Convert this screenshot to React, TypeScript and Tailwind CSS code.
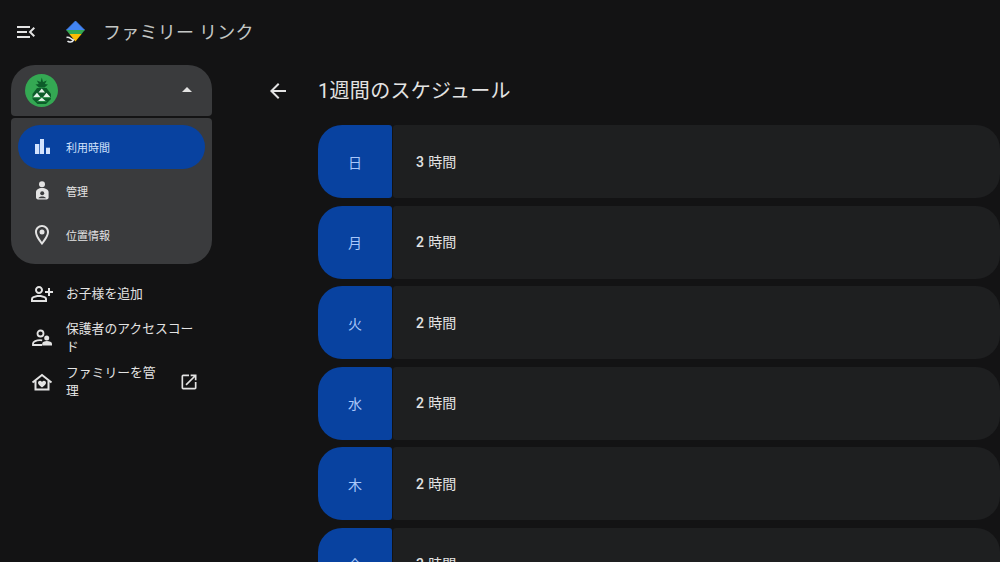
import { MdArrowBack, MdArrowDropUp, MdMenuOpen, MdOpenInNew, MdOutlineLocationOn, MdOutlinePersonAddAlt } from "react-icons/md";

const schedule = [
  { day: "日", num: "3", unit: "時間" },
  { day: "月", num: "2", unit: "時間" },
  { day: "火", num: "2", unit: "時間" },
  { day: "水", num: "2", unit: "時間" },
  { day: "木", num: "2", unit: "時間" },
  { day: "金", num: "3", unit: "時間" },
];

function KiteLogo() {
  return (
    <svg width="24" height="26" viewBox="0 0 24 26" className="shrink-0">
      <path d="M11.5 1 L20.5 10 L2.5 10 Z" fill="#4285f4" stroke="#4285f4" strokeWidth="0.8" strokeLinejoin="round" />
      <path d="M2.2 10 L20.8 10 L17.6 14 L5.4 14 Z" fill="#34a853" />
      <path d="M5.4 14 L17.6 14 L11.5 21.5 Z" fill="#fbbc04" />
      <path d="M2.5 17.5 C5.5 16.5 7 19.5 9.5 20 C8 22.5 5 22.5 3.5 21" fill="none" stroke="#e8eaed" strokeWidth="1.5" />
    </svg>
  );
}

function PineAvatar() {
  return (
    <svg width="33" height="33" viewBox="0 0 33 33" className="shrink-0">
      <circle cx="16.5" cy="16.5" r="16.5" fill="#34a853" />
      <path d="M16.8 3.5 L18 8 L21.8 6.5 L19.8 10 L23 10.5 L19.5 13.5 L14 13.5 L10.5 10.5 L13.8 10 L11.8 6.5 L15.6 8 Z" fill="#0d5c2a" />
      <path d="M12 14 H21.5 L26 20 L26 25 L21 30 H12.5 L7.5 25 L7.5 20 Z" fill="#0d5c2a" />
      <path d="M16.8 14.5 L20 18.5 H13.5 Z" fill="#e6f4ea" />
      <path d="M12 18.8 L15.5 23.2 H8 Z M21.5 18.8 L25.5 23.2 H18 Z" fill="#e6f4ea" />
      <path d="M16.8 23.5 L20.5 27 H13 Z" fill="#e6f4ea" />
      <path d="M7.5 23.7 H26 M12 27.4 H21.5" stroke="#34a853" strokeWidth="0.7" />
    </svg>
  );
}

function BarsIcon() {
  return (
    <svg width="24" height="24" viewBox="0 0 24 24" fill="currentColor" className="shrink-0">
      <rect x="5" y="9" width="4.3" height="10" />
      <rect x="10" y="4" width="4" height="15" />
      <rect x="16" y="12.7" width="4" height="6.3" />
    </svg>
  );
}

function SupervisedIcon() {
  return (
    <svg width="24" height="24" viewBox="0 0 24 24" fill="currentColor" className="shrink-0">
      <circle cx="12" cy="5.3" r="3" />
      <path d="M12 9 C8.5 9 6 10.8 6 13 V18.5 C6 19.6 6.9 20.4 8 20.4 H16.6 C17.7 20.4 18.6 19.6 18.6 18.5 V13 C18.6 10.8 15.5 9 12 9 Z" />
      <circle cx="12.2" cy="14.2" r="2" fill="#3a3b3d" />
      <path d="M8.4 19.2 C9.2 16.8 15.2 16.8 16 19.2 Z" fill="#3a3b3d" />
    </svg>
  );
}

function ParentCodeIcon() {
  return (
    <svg width="24" height="24" viewBox="0 0 24 24" fill="none" stroke="currentColor" strokeWidth="1.8" className="shrink-0">
      <circle cx="10.5" cy="7.5" r="3" />
      <path d="M12 19 H3 V17.5 C3 15.5 6.5 14.2 10 14.2 C10.8 14.2 11.5 14.3 12.2 14.4" />
      <circle cx="16.7" cy="12" r="2.5" fill="currentColor" stroke="none" />
      <path d="M12.2 19.4 V17.8 C12.2 16 14.4 15 16.9 15 S22 16 22 17.8 V19.4 Z" fill="currentColor" stroke="none" />
    </svg>
  );
}

function HomeHeartIcon() {
  return (
    <svg width="24" height="24" viewBox="0 0 24 24" fill="none" className="shrink-0">
      <path d="M2.5 12.5 L12 5 L21.5 12.5 M5.5 10.5 V19.5 H18.5 V10.5" stroke="currentColor" strokeWidth="2" />
      <path d="M12 17.5 C9 15.3 8 14 8 12.8 C8 11.6 9 10.8 10 10.8 C10.8 10.8 11.5 11.2 12 11.9 C12.5 11.2 13.2 10.8 14 10.8 C15 10.8 16 11.6 16 12.8 C16 14 15 15.3 12 17.5 Z" fill="currentColor" />
    </svg>
  );
}

export default function App() {
  return (
    <div
      className="flex h-[562px] w-[1000px] flex-col overflow-hidden bg-[#131314] text-[#e3e3e3]"
      style={{ fontFamily: 'Roboto, "Noto Sans CJK JP", sans-serif' }}
    >
      <header className="flex h-[65px] shrink-0 items-center pl-[14px]">
        <MdMenuOpen size={24} className="mb-[2px] shrink-0" />
        <div className="ml-[26px]">
          <KiteLogo />
        </div>
        <span className="ml-[15px] text-[18px] tracking-[0.25px] text-[#c4c7c5]">ファミリー リンク</span>
      </header>

      <div className="flex min-h-0 flex-1">
        <aside className="w-[212px] shrink-0 pl-[11px]">
          <div className="flex h-[51px] items-center justify-between rounded-t-[24px] rounded-b-[4px] bg-[#3a3b3d] pl-[14px] pr-[13px]">
            <PineAvatar />
            <MdArrowDropUp size={24} className="mb-[2px]" />
          </div>
          <nav className="mt-[2px] flex h-[146px] flex-col rounded-t-[4px] rounded-b-[24px] bg-[#3a3b3d] px-[7px] pt-[7px] text-[11px]">
            <div className="flex h-[44px] items-center rounded-full bg-[#0842a0] pl-[12px] text-[#d3e3fd]">
              <BarsIcon />
              <span className="ml-[12px] mt-[4px]">利用時間</span>
            </div>
            <div className="flex h-[44px] items-center pl-[12px]">
              <SupervisedIcon />
              <span className="ml-[12px] mt-[4px]">管理</span>
            </div>
            <div className="flex h-[44px] items-center pl-[12px]">
              <MdOutlineLocationOn size={24} className="shrink-0" />
              <span className="ml-[12px] mt-[4px]">位置情報</span>
            </div>
          </nav>
          <div className="mt-[8px] flex flex-col text-[12.8px] leading-[18px]">
            <div className="flex h-[44px] items-center pl-[19px]">
              <MdOutlinePersonAddAlt size={24} className="shrink-0" />
              <span className="ml-[12px]">お子様を追加</span>
            </div>
            <div className="flex h-[44px] items-center pl-[19px]">
              <ParentCodeIcon />
              <span className="ml-[12px] w-[130px]">保護者のアクセスコード</span>
            </div>
            <div className="flex h-[44px] items-center pl-[19px] pr-[13px]">
              <HomeHeartIcon />
              <span className="ml-[12px] w-[92px]">ファミリーを管理</span>
              <MdOpenInNew size={20} className="ml-auto mb-[1px] shrink-0" />
            </div>
          </div>
        </aside>

        <main className="min-w-0 flex-1">
          <div className="flex h-[51px] items-center pl-[54px]">
            <MdArrowBack size={24} className="shrink-0" />
            <h1 className="ml-[28px] mt-[1px] text-[20px] font-normal tracking-[0.3px] text-[#e3e3e3]">1週間のスケジュール</h1>
          </div>
          <div className="mt-[9px] flex flex-col gap-[7.5px] pl-[106px]">
            {schedule.map((row) => (
              <div key={row.day} className="flex h-[73px] shrink-0 gap-[1px]">
                <div className="flex w-[74px] shrink-0 items-center justify-center rounded-l-[24px] rounded-r-[3px] bg-[#0842a0] pt-[3px] text-[14px] text-[#a8c7fa]">
                  {row.day}
                </div>
                <div className="flex flex-1 items-center rounded-l-[3px] rounded-r-[24px] bg-[#1e1f20] pl-[23px] pt-[1px] text-[14px] tracking-[0.2px] text-[#e3e3e3]">
                  <span className="font-medium">{row.num}</span>
                  <span className="ml-[4px]">{row.unit}</span>
                </div>
              </div>
            ))}
          </div>
        </main>
      </div>
    </div>
  );
}
